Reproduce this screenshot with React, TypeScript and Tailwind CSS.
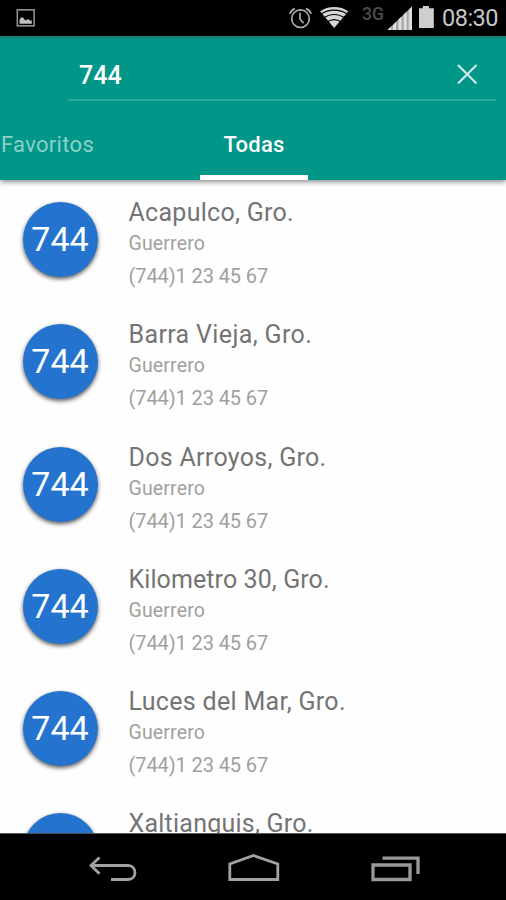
const places = [
  { name: 'Acapulco, Gro.', spacing: 'tracking-[0.28px]' },
  { name: 'Barra Vieja, Gro.', spacing: 'tracking-[0.36px]' },
  { name: 'Dos Arroyos, Gro.', spacing: 'tracking-[0.3px]' },
  { name: 'Kilometro 30, Gro.', spacing: 'tracking-[0.09px]' },
  { name: 'Luces del Mar, Gro.', spacing: 'tracking-[0.31px]' },
  { name: 'Xaltianguis, Gro.', spacing: 'tracking-[0.24px]' },
];

function StatusBar() {
  return (
    <header className="flex h-9 shrink-0 items-center bg-black pl-4 text-[#c6c6c6]">
      <svg width="20" height="20" viewBox="0 0 20 20" fill="none">
        <rect x="1.3" y="1.8" width="16.8" height="16" stroke="#909090" strokeWidth="1.6" />
        <path d="M3.5 15.8v-4l1.6-2.3h2l1.3 2 1.6 1 2-1.5 2 1.5h1.8v3.3z" fill="#c0c0c0" />
      </svg>
      <div className="ml-auto flex h-9 items-center">
        <svg width="154" height="36" viewBox="0 0 154 36" fill="none" className="shrink-0">
          <g stroke="#adadad" strokeWidth="1.7" transform="translate(1 0)">
            <circle cx="12.5" cy="18.7" r="8.8" />
            <path d="M12 12.8v6.2l3.6 4.2M1.8 13.8Q3 10.3 6.8 8.6M18 8.6Q22 10.3 23.2 13.8" />
          </g>
          <g transform="translate(.7 0)">
            <path d="M32.5 11.5C40 5.6 53 5.6 60.5 11.5L46.5 28z" fill="#d5d5d5" />
            <path d="M33 14.2C41 8.7 52 8.7 60 14.2M36 18C42.5 13.3 50.5 13.3 57 18M39.5 22C43.5 18.8 49.5 18.8 53.5 22" stroke="#000" strokeWidth="1.2" />
          </g>
          <text x="75" y="19.5" fill="#4d4d4d" fontFamily="Roboto, sans-serif" fontSize="17.5" fontWeight="500">3G</text>
          <g transform="translate(1 0)">
            <path d="M99.5 30L124 6.5V30z" fill="#a6a6a6" />
            <path d="M99.5 30l3.6-3.4V30zM105 30v-5l3-3v8zM110.5 30V19.5l3-2.8V30zM115.7 30V14.6l3-2.8V30zM120.7 30V9.9l3.3-3.4V30z" fill="#dedede" />
            <path d="M131 8.3h3.8V6h6.2v2.3h4.8V28H131z" fill="#cecece" />
          </g>
        </svg>
        <time className="ml-[1px] w-[64px] whitespace-nowrap pt-0.5 font-['Roboto',sans-serif] text-[23.5px] tracking-[-0.5px]">08:30</time>
      </div>
    </header>
  );
}

function AppBar() {
  return (
    <section className="relative z-10 flex h-36 shrink-0 flex-col bg-[#009688] text-white shadow-[0_2px_5px_rgba(0,0,0,.45)]">
      <div className="h-1 bg-gradient-to-b from-[#187a70] to-[#009688]" />
      <div className="ml-[68px] mr-[10px] flex h-[61px] items-center justify-between border-b-2 border-[#30a89c] pl-[11px] pr-[18px]">
        <span className="pt-3 text-[25px] font-medium leading-[30px]">744</span>
        <svg width="21" height="21" viewBox="0 0 21 21" className="mt-2.5" stroke="#cdebe7" strokeWidth="2.2">
          <path d="M1 1l18.5 18.5M19.5 1L1 19.5" />
        </svg>
      </div>
      <nav className="flex flex-1 text-[22px] leading-[30px]">
        <div className="w-[200px] pl-px pt-[29px] tracking-[0.3px] text-[#8cd0c9]">Favoritos</div>
        <div className="w-[108px] border-b-[5px] border-white pt-[29px] text-center font-medium tracking-[0.2px]">Todas</div>
      </nav>
    </section>
  );
}

function NavigationBar() {
  return (
    <footer className="flex h-[67px] shrink-0 items-start border-t border-[#555] bg-black pl-[89px] pt-[17px]">
      <svg width="334" height="38" viewBox="0 0 334 38" fill="none" stroke="#a2a2a2" strokeWidth="2.8">
        <path d="M10.5 6.5L2 14.5l8.5 8.3M2 14.5h37c9.3 0 9.3 14 0 14H22" />
        <path d="M140.8 28.5V13L164.5 4.5l24.3 8.5v15.5z" />
        <path d="M284 14h37v14.5h-37zM293.5 7.2H329V23" stroke="#999" strokeWidth="3.3" />
      </svg>
    </footer>
  );
}

export default function App() {
  return (
    <main className="flex h-[900px] w-[506px] flex-col overflow-hidden bg-[#fefefe] font-['Roboto',sans-serif]">
      <StatusBar />
      <AppBar />
      <ul className="h-[653px] shrink-0 overflow-hidden">
        {places.map(({ name, spacing }) => (
          <li key={name} className="flex h-[122.3px] pl-[23px] pt-[18px]">
            <div className="mt-1 h-[75px] w-[75px] shrink-0 rounded-full bg-[#2474cf] text-center text-[34px] leading-[75px] text-white shadow-[0_2px_4px_rgba(0,0,0,.65)]">
              <span className="-ml-px">744</span>
            </div>
            <div className="ml-[30.5px] whitespace-nowrap text-[#a0a0a0]">
              <h2 className={`text-[25px] leading-[30px] text-[#747474] ${spacing}`}>{name}</h2>
              <p className="mt-[3px] text-[19.5px] leading-[26px] tracking-[0.15px]">Guerrero</p>
              <p className="mt-1.5 text-[20px] leading-[26px] tracking-[-0.1px]">(744)1 23 45 67</p>
            </div>
          </li>
        ))}
      </ul>
      <NavigationBar />
    </main>
  );
}
